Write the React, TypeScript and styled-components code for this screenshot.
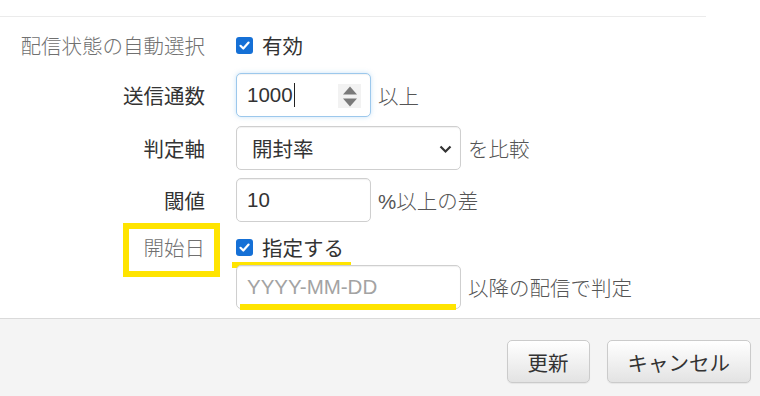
import React from "react";
import styled, { createGlobalStyle } from "styled-components";

const GlobalStyle = createGlobalStyle`
    html, body {
        margin: 0;
        padding: 0;
        background: #fff;
    }
    body {
        font-family: "Liberation Sans", "Noto Sans CJK JP", sans-serif;
        font-size: 20.5px;
        color: #333;
    }
`

const Page = styled.div`
    width: 760px;
    height: 396px;
    display: flex;
    flex-direction: column;
    overflow: hidden;
`

const TopRule = styled.div`
    margin-top: 16px;
    width: 706px;
    height: 1px;
    background: #ebebeb;
`

const Form = styled.div`
    height: 301px;
    display: flex;
    flex-direction: column;
`

const Row = styled.div<{ $top: number; $h: number }>`
    position: relative;
    display: flex;
    align-items: center;
    gap: 31px;
    margin-top: ${p => p.$top}px;
    height: ${p => p.$h}px;
`

const Label = styled.div<{ $muted?: boolean }>`
    position: relative;
    width: 205px;
    flex-shrink: 0;
    text-align: right;
    color: ${p => (p.$muted ? "#707070" : "#333")};
    font-weight: ${p => (p.$muted ? 300 : 400)};
    white-space: nowrap;
`

const Control = styled.div`
    display: flex;
    align-items: center;
    gap: 7px;
`

const CheckLabel = styled.label`
    display: flex;
    align-items: center;
    gap: 9px;
    color: #333;
`

const CheckBox = styled.span`
    width: 17px;
    height: 17px;
    border-radius: 3px;
    background: #1570d6;
    display: flex;
    align-items: center;
    justify-content: center;
`

const Field = styled.div<{ $w: number; $focus?: boolean }>`
    position: relative;
    box-sizing: border-box;
    width: ${p => p.$w}px;
    height: 44px;
    padding: 0 10px;
    display: flex;
    align-items: center;
    border: 1px solid ${p => (p.$focus ? "#9cc8ec" : "#cfcfcf")};
    border-radius: 5px;
    background: #fff;
    box-shadow: ${p =>
        p.$focus
            ? "inset 0 1px 1px rgba(0,0,0,.05), 0 0 5px rgba(102,175,233,.35)"
            : "inset 0 1px 1px rgba(0,0,0,.06)"};
    color: #333;
`

const Placeholder = styled.span`
    color: #a3a3a3;
`

const Caret = styled.span`
    display: inline-block;
    width: 1px;
    height: 24px;
    background: #222;
    margin-left: 1px;
`

const Spinner = styled.div`
    position: absolute;
    right: 9px;
    top: 10px;
    width: 23px;
    height: 24px;
    background: #f2f2f2;
    display: flex;
    align-items: center;
    justify-content: center;
`

const Chevron = styled.svg`
    position: absolute;
    right: 8px;
    top: 18px;
`

const SelectText = styled.span`
    margin-left: 5px;
`

const Suffix = styled.span`
    color: #555;
    font-weight: 300;
    white-space: nowrap;
`

const HighlightBox = styled.div`
    position: absolute;
    left: 123px;
    top: -6px;
    width: 97px;
    height: 54px;
    box-sizing: border-box;
    border: 6px solid #ffe400;
`

const Underline = styled.div<{ $left: number; $top: number; $w: number }>`
    position: absolute;
    left: ${p => p.$left}px;
    top: ${p => p.$top}px;
    width: ${p => p.$w}px;
    height: 6px;
    background: #ffe400;
`

const Footer = styled.div`
    flex: 1;
    border-top: 1px solid #dadada;
    background: #f4f4f4;
    display: flex;
    justify-content: flex-end;
    align-items: flex-start;
    gap: 17px;
    padding: 21px 9px 0 0;
`

const Button = styled.button`
    box-sizing: border-box;
    height: 43px;
    padding: 0 20px;
    font-family: inherit;
    font-size: 20.5px;
    color: #333;
    border: 1px solid #cbcbcb;
    border-radius: 5px;
    background: linear-gradient(#ffffff, #e3e3e3);
    box-shadow: inset 0 1px 0 rgba(255,255,255,.2), 0 1px 1px rgba(0,0,0,.06);
`

function Check() {
    return (
        <CheckBox>
            <svg width="13" height="13" viewBox="0 0 13 13">
                <path d="M2.5 6.8 L5.3 9.5 L10.6 3.6" fill="none" stroke="#fff" strokeWidth="2.2" strokeLinecap="round" strokeLinejoin="round" />
            </svg>
        </CheckBox>
    )
}

export default function App() {
    return (
        <Page>
            <GlobalStyle />
            <TopRule />
            <Form>
                <Row $top={10} $h={36}>
                    <Label $muted>配信状態の自動選択</Label>
                    <CheckLabel><Check />有効</CheckLabel>
                </Row>
                <Row $top={10} $h={44}>
                    <Label>送信通数</Label>
                    <Control>
                        <Field $w={135} $focus>
                            1000<Caret />
                            <Spinner>
                                <svg width="16" height="23" viewBox="0 0 16 23">
                                    <path d="M8 1.5 L15 9.5 L1 9.5 Z" fill="#7a7a7a" />
                                    <path d="M8 21.5 L15 13.5 L1 13.5 Z" fill="#7a7a7a" />
                                </svg>
                            </Spinner>
                        </Field>
                        <Suffix>以上</Suffix>
                    </Control>
                </Row>
                <Row $top={9} $h={44}>
                    <Label>判定軸</Label>
                    <Control>
                        <Field $w={225}>
                            <SelectText>開封率</SelectText>
                            <Chevron width="13" height="9" viewBox="0 0 13 9">
                                <path d="M1.5 1.5 L6.5 6.5 L11.5 1.5" fill="none" stroke="#333" strokeWidth="2.2" />
                            </Chevron>
                        </Field>
                        <Suffix>を比較</Suffix>
                    </Control>
                </Row>
                <Row $top={8} $h={44}>
                    <Label>閾値</Label>
                    <Control>
                        <Field $w={135}>10</Field>
                        <Suffix>%以上の差</Suffix>
                    </Control>
                </Row>
                <Row $top={7} $h={36}>
                    <Label $muted>開始日</Label>
                    <HighlightBox />
                    <CheckLabel><Check />指定する</CheckLabel>
                    <Underline $left={232} $top={33} $w={119} />
                </Row>
                <Row $top={0} $h={43}>
                    <Label />
                    <Control>
                        <Field $w={225}><Placeholder>YYYY-MM-DD</Placeholder></Field>
                        <Suffix>以降の配信で判定</Suffix>
                    </Control>
                    <Underline $left={240} $top={39} $w={216} />
                </Row>
            </Form>
            <Footer>
                <Button>更新</Button>
                <Button>キャンセル</Button>
            </Footer>
        </Page>
    )
}
